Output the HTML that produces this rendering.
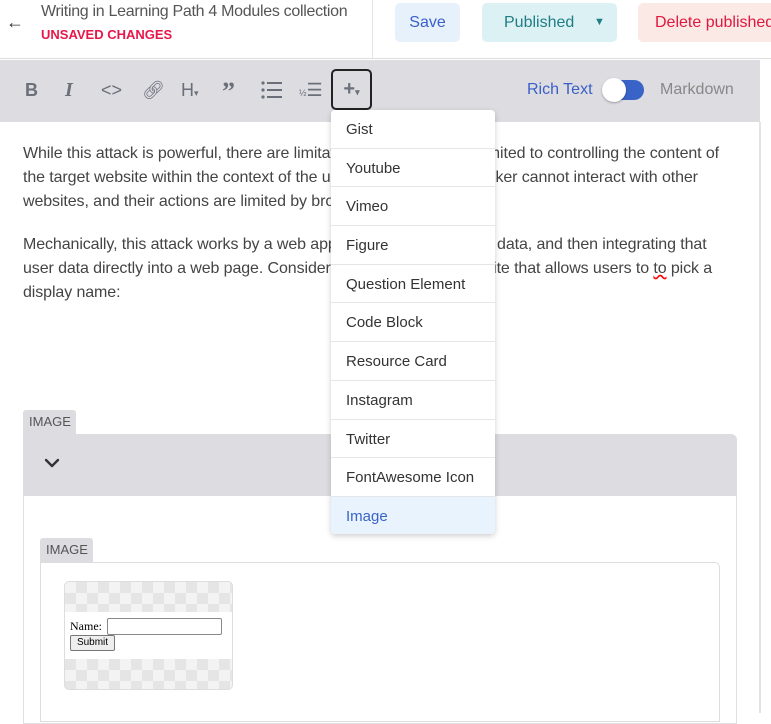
<!DOCTYPE html>
<html><head><meta charset="utf-8"><style>
*{box-sizing:border-box;margin:0;padding:0}
body{width:771px;height:713px;overflow:hidden;background:#fff;font-family:"Liberation Sans",sans-serif;position:relative;color:#444}
.abs{position:absolute}
.hdr{left:0;top:0;width:771px;height:59px;border-bottom:1px solid #ddd;background:#fff}
.btn{position:absolute;top:3px;height:39px;border-radius:5px;font-size:16px;line-height:39px;text-align:center}
.tb{left:0;top:60px;width:760px;height:62px;background:#dcdce1}
.tbi{position:absolute;top:80px;font-size:18px;color:#6b6f7a;font-weight:bold}
.p{position:absolute;left:23px;font-size:16px;line-height:24px;color:#444;white-space:nowrap;letter-spacing:-0.1px}
.menu{left:331px;top:110px;width:164px;height:424px;background:#fff;border-radius:4px;box-shadow:0 2px 6px rgba(0,0,0,.2);overflow:hidden}
.mi{height:38.7px;line-height:40px;padding-left:15px;font-size:15px;color:#333;border-bottom:1px solid #e6e6e9}
.tab{background:#dcdce1;font-size:13px;color:#555;line-height:24px;padding-left:6px;border-radius:3px 3px 0 0}
.chk{background-color:#f3f3f3;background-image:linear-gradient(45deg,#e5e5e5 25%,transparent 25%,transparent 75%,#e5e5e5 75%),linear-gradient(45deg,#e5e5e5 25%,transparent 25%,transparent 75%,#e5e5e5 75%);background-size:22px 22px;background-position:0 0,11px 11px}
</style></head><body>
<div class="abs hdr"></div>
<div class="abs" style="left:6px;top:12px;font-size:18px;color:#333">←</div>
<div class="abs" style="left:41px;top:3px;font-size:16px;color:#555;letter-spacing:-0.3px">Writing in Learning Path 4 Modules collection</div>
<div class="abs" style="left:41px;top:27px;font-size:13px;font-weight:bold;color:#e8174a">UNSAVED CHANGES</div>
<div class="abs" style="left:372px;top:0;width:1px;height:58px;background:#e5e5e5"></div>
<div class="btn" style="left:395px;width:65px;background:#e6f1fc;color:#3a5fc8">Save</div>
<div class="btn" style="left:482px;width:135px;background:#dbf1f4;color:#1f7d84;text-align:left;padding-left:22px">Published<span style="position:absolute;left:112px;font-size:11px">▼</span></div>
<div class="btn" style="left:638px;width:140px;background:#fbe9e6;color:#e0173f;text-align:left;padding-left:17px">Delete published</div>
<div class="abs tb"></div>
<div class="tbi" style="left:25px">B</div>
<div class="tbi" style="left:65px;font-style:italic;font-family:'Liberation Serif',serif;font-size:20px;top:79px">I</div>
<div class="tbi" style="left:101px;font-weight:normal">&lt;&gt;</div>
<div class="tbi" style="left:142px;font-weight:normal">🔗︎</div>
<div class="tbi" style="left:181px;font-weight:normal">H<span style="font-size:9px">▾</span></div>
<div class="tbi" style="left:222px;font-family:'Liberation Serif',serif;font-size:26px;top:77px">”</div>
<svg class="abs" style="left:261px;top:81px" width="22" height="18" viewBox="0 0 22 18"><g fill="#6b6f7a"><circle cx="2" cy="2" r="1.6"/><circle cx="2" cy="9" r="1.6"/><circle cx="2" cy="16" r="1.6"/><rect x="6" y="1" width="15" height="2"/><rect x="6" y="8" width="15" height="2"/><rect x="6" y="15" width="15" height="2"/></g></svg>
<div class="tbi" style="left:299px;font-weight:normal;font-size:18px"><span style="font-size:9px">½</span>☰</div>
<div class="abs" style="left:331px;top:69px;width:41px;height:41px;border:2px solid #222;border-radius:5px;background:#dcdce1;color:#6b6f7a;font-size:20px;font-weight:bold;text-align:center;line-height:36px">+<span style="font-size:9px">▾</span></div>
<div class="abs" style="left:527px;top:81px;font-size:16px;color:#3a5fc8">Rich Text</div>
<div class="abs" style="left:603px;top:80px;width:41px;height:20px;border-radius:10px;background:#3a63c8"></div>
<div class="abs" style="left:602px;top:78px;width:24px;height:24px;border-radius:12px;background:#fff;box-shadow:0 1px 2px rgba(0,0,0,.3)"></div>
<div class="abs" style="left:660px;top:81px;font-size:16px;color:#888">Markdown</div>
<div class="abs" style="left:759px;top:122px;width:2px;height:591px;background:#e3e3e6"></div>
<div class="p" style="top:142px">While this attack is powerful, there are limitations. The attacker is limited to controlling the content of</div>
<div class="p" style="top:166px">the target website within the context of the user's session. The attacker cannot interact with other</div>
<div class="p" style="top:190px">websites, and their actions are limited by browser security policies.</div>
<div class="p" style="top:233px">Mechanically, this attack works by a web application accepting user data, and then integrating that</div>
<div class="p" style="top:257px">user data directly into a web page. Consider the example of a website that allows users to <span style="text-decoration:underline wavy red">to</span> pick a</div>
<div class="p" style="top:281px">display name:</div>
<div class="abs tab" style="left:23px;top:410px;width:53px;height:24px">IMAGE</div>
<div class="abs" style="left:23px;top:434px;width:714px;height:290px;border:1px solid #e0e0e3;border-radius:0 6px 0 0"></div>
<div class="abs" style="left:23px;top:434px;width:714px;height:62px;background:#dcdce1;border-radius:0 6px 0 0"></div>
<svg class="abs" style="left:44px;top:458px" width="16" height="10" viewBox="0 0 16 10"><path d="M2 2 L8 8 L14 2" fill="none" stroke="#333" stroke-width="2.4" stroke-linecap="round" stroke-linejoin="round"/></svg>
<div class="abs tab" style="left:40px;top:538px;width:53px;height:24px">IMAGE</div>
<div class="abs" style="left:40px;top:562px;width:680px;height:160px;border:1px solid #ddd;border-radius:0 5px 0 0"></div>
<div class="abs chk" style="left:64px;top:581px;width:169px;height:109px;border:1px solid #ddd;border-radius:5px"></div>
<div class="abs" style="left:65px;top:612px;width:167px;height:47px;background:#fff"></div>
<div class="abs" style="left:70px;top:619px;font-family:'Liberation Serif',serif;font-size:12px;color:#000">Name:</div>
<div class="abs" style="left:107px;top:618px;width:115px;height:17px;border:1px solid #888;border-radius:2px"></div>
<div class="abs" style="left:70px;top:635px;width:45px;height:16px;border:1px solid #777;background:#eee;font-size:10px;color:#000;text-align:center;line-height:14px;border-radius:2px">Submit</div>
<div class="abs menu">
<div class="mi">Gist</div><div class="mi">Youtube</div><div class="mi">Vimeo</div><div class="mi">Figure</div><div class="mi">Question Element</div><div class="mi">Code Block</div><div class="mi">Resource Card</div><div class="mi">Instagram</div><div class="mi">Twitter</div><div class="mi">FontAwesome Icon</div><div class="mi" style="background:#e8f3fd;color:#3a63c8;border:0">Image</div>
</div>
</body></html>
